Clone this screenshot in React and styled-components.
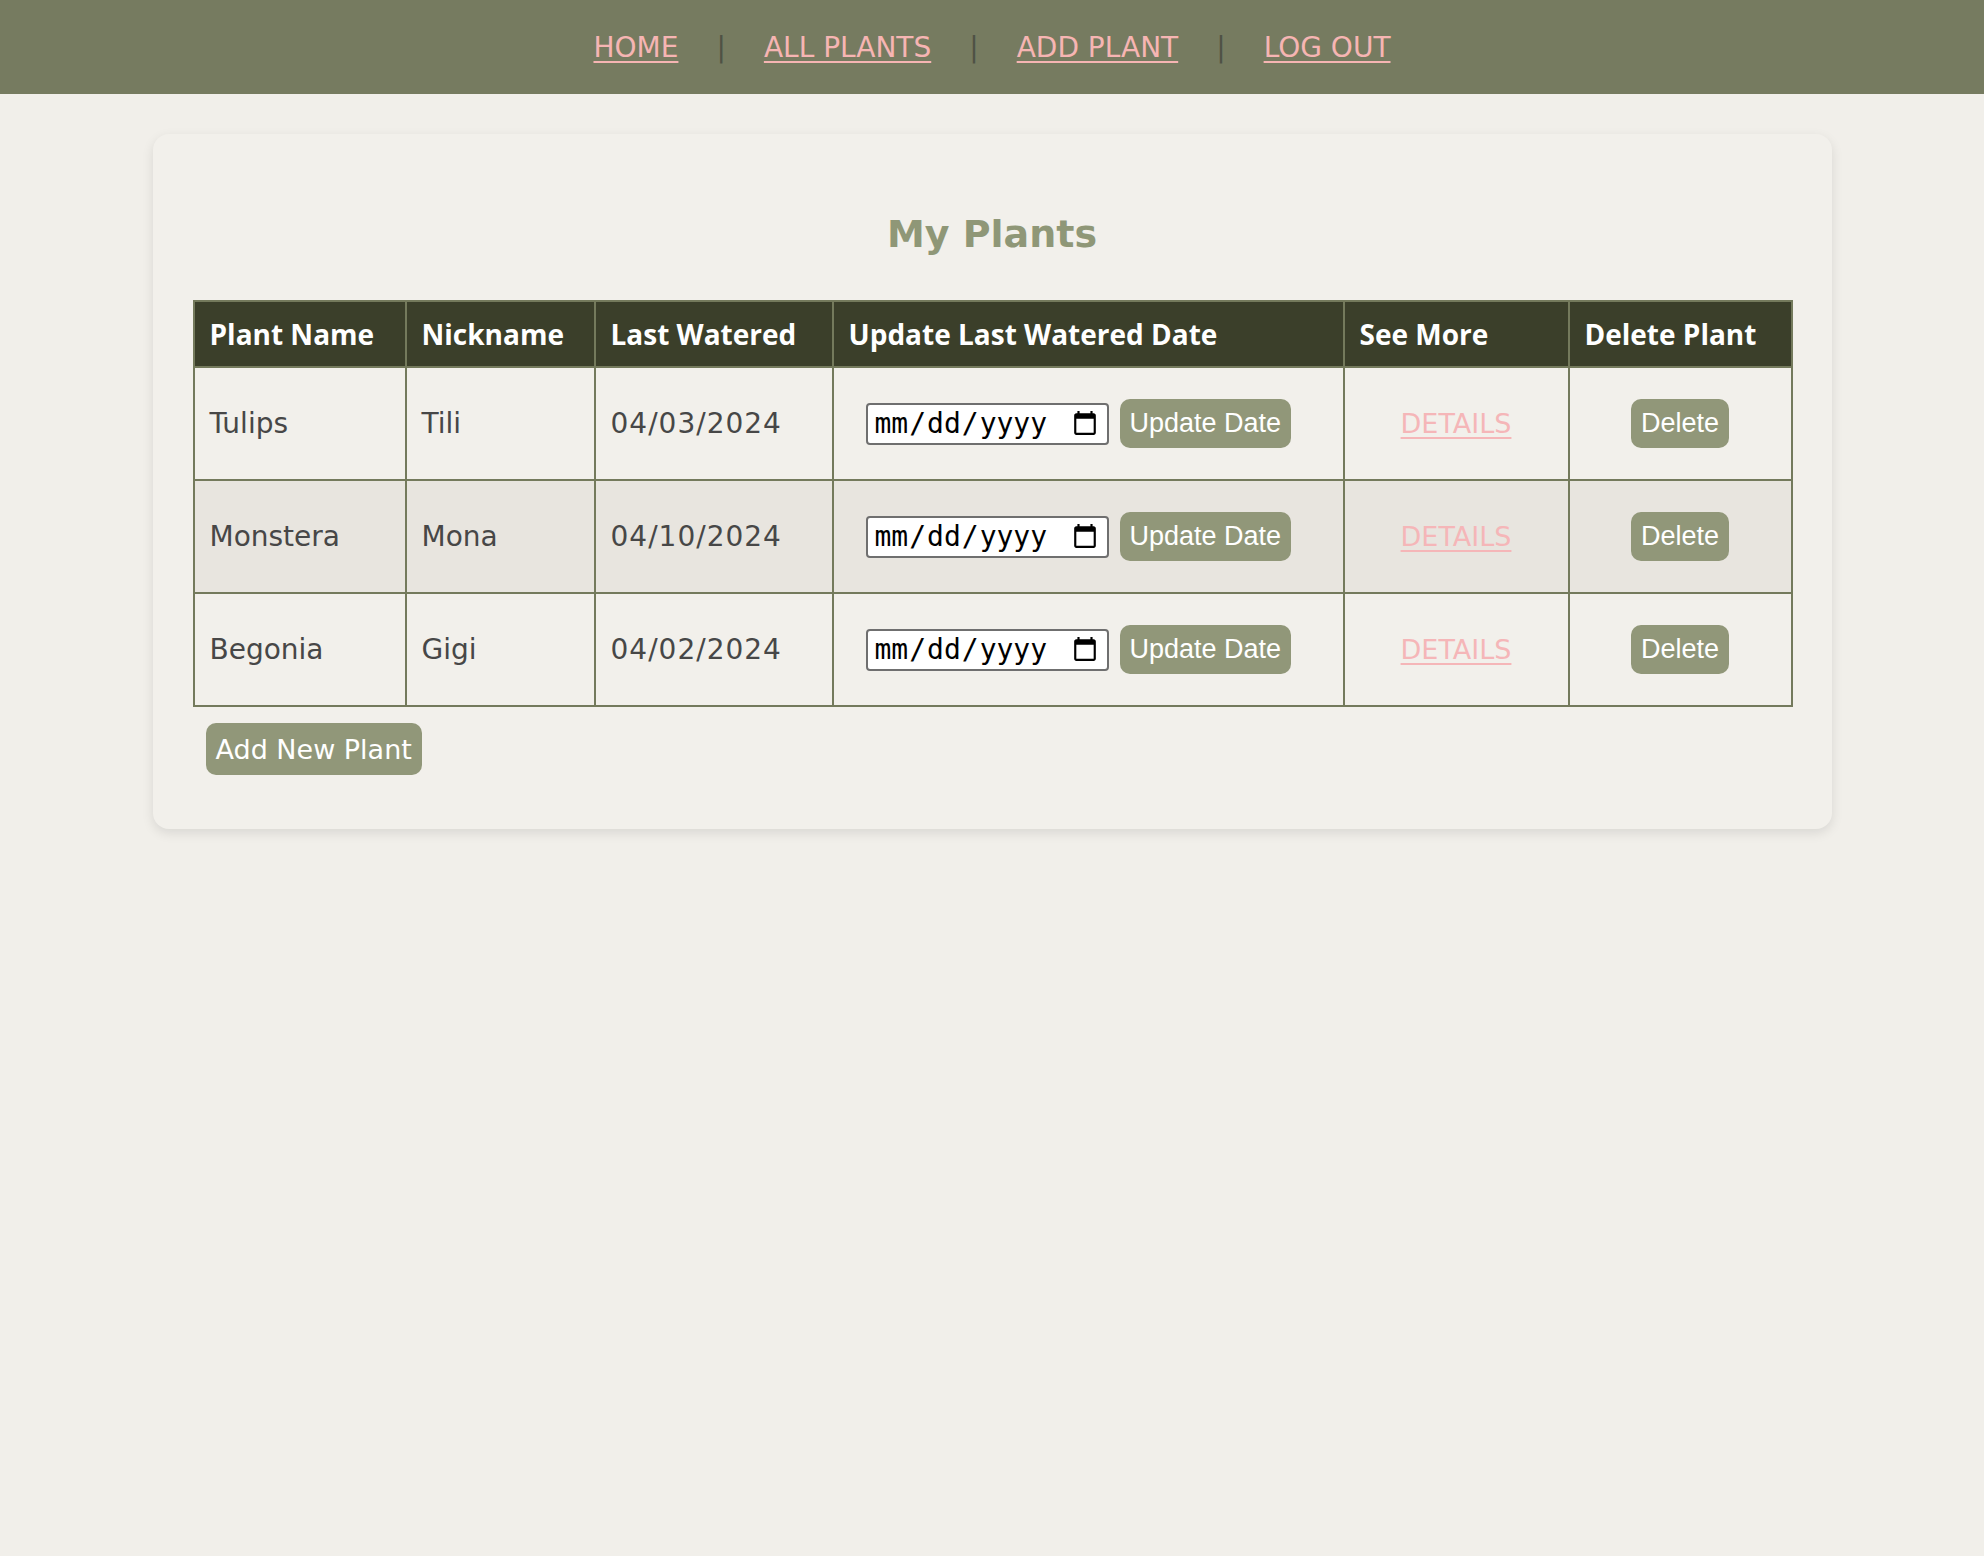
import React from 'react';
import styled, { createGlobalStyle } from 'styled-components';

const GlobalStyle = createGlobalStyle`
  html, body {
    margin: 0;
    padding: 0;
    background-color: #f1efea;
    font-family: "DejaVu Sans", "Noto Sans", sans-serif;
  }
`;

const NavBar = styled.nav`
  display: flex;
  justify-content: center;
  align-items: center;
  height: 94px;
  background-color: #767b60;
`;

const NavLink = styled.a`
  font-size: 28px;
  color: #f6b5b3;
  text-decoration: underline;
  text-underline-offset: 4px;
  text-decoration-thickness: 2px;
  cursor: pointer;
`;

const NavSep = styled.span`
  font-size: 28px;
  color: #4f5245;
  margin: 0 38px;
`;

const Card = styled.main`
  width: 1599px;
  margin: 40px auto;
  padding: 78px 40px 54px;
  background-color: #f2f0eb;
  border-radius: 16px;
  box-shadow: 0 4px 12px rgba(0, 0, 0, 0.1);
`;

const Title = styled.h2`
  margin: 0 0 44px;
  text-align: center;
  font-size: 38px;
  line-height: 44px;
  color: #8f9777;
`;

const Table = styled.table`
  width: 100%;
  border-collapse: collapse;
  table-layout: fixed;
  border: 2px solid #747a5c;
`;

const Th = styled.th`
  box-sizing: border-box;
  width: ${({ w }) => w}px;
  padding: 15px 15px;
  text-align: left;
  font-family: "Open Sans", "DejaVu Sans", sans-serif;
  font-weight: 700;
  font-size: 28px;
  line-height: 34px;
  color: #ffffff;
  background-color: #3b3f2a;
  border: 2px solid #747a5c;
  border-radius: 4px;
`;

const Row = styled.tr`
  background-color: ${({ alt }) => (alt ? '#e8e5df' : '#f2f0eb')};
`;

const Td = styled.td`
  height: 79px;
  padding: 16px 15px;
  font-size: 28px;
  color: #474747;
  letter-spacing: ${({ spaced }) => (spaced ? '1px' : '0')};
  text-align: ${({ center }) => (center ? 'center' : 'left')};
  border: 2px solid #747a5c;
`;

const DateForm = styled.div`
  display: flex;
  align-items: center;
  gap: 11px;
  padding-left: 17px;
`;

const DateInput = styled.input`
  width: 243px;
  height: 42px;
  box-sizing: border-box;
  padding: 0 6px;
  font-family: "DejaVu Sans Mono", monospace;
  font-size: 28px;
  color: #000;
  background: #fff;
  border: 2px solid #6f6f6f;
  border-radius: 4px;
`;

const SmallButton = styled.button`
  height: 49px;
  padding: 0 10px;
  font-family: "Liberation Sans", Arial, sans-serif;
  font-size: 27px;
  color: #ffffff;
  background-color: #919779;
  border: none;
  border-radius: 10px;
  cursor: pointer;
`;

const DetailsLink = styled.a`
  font-size: 27px;
  color: #f5b6b8;
  text-decoration: underline;
  text-underline-offset: 4px;
  text-decoration-thickness: 2px;
  cursor: pointer;
`;

const AddButton = styled.button`
  margin: 16px 0 0 13px;
  height: 52px;
  padding: 0 10px;
  font-family: "DejaVu Sans", sans-serif;
  font-size: 27px;
  color: #ffffff;
  background-color: #919779;
  border: none;
  border-radius: 10px;
  cursor: pointer;
`;

const plants = [
  { name: 'Tulips', nickname: 'Tili', watered: '04/03/2024' },
  { name: 'Monstera', nickname: 'Mona', watered: '04/10/2024' },
  { name: 'Begonia', nickname: 'Gigi', watered: '04/02/2024' },
];

const columns = [
  ['Plant Name', 212],
  ['Nickname', 189],
  ['Last Watered', 238],
  ['Update Last Watered Date', 511],
  ['See More', 225],
  ['Delete Plant', 223],
];

const links = ['HOME', 'ALL PLANTS', 'ADD PLANT', 'LOG OUT'];

export default function App() {
  return (
    <>
      <GlobalStyle />
      <NavBar>
        {links.map((l, i) => (
          <React.Fragment key={l}>
            {i > 0 && <NavSep>|</NavSep>}
            <NavLink>{l}</NavLink>
          </React.Fragment>
        ))}
      </NavBar>

      <Card>
        <Title>My Plants</Title>
        <Table>
          <thead>
            <tr>
              {columns.map(([label, w]) => (
                <Th key={label} w={w}>{label}</Th>
              ))}
            </tr>
          </thead>
          <tbody>
            {plants.map((p, i) => (
              <Row key={p.name} alt={i % 2 === 1}>
                <Td>{p.name}</Td>
                <Td>{p.nickname}</Td>
                <Td spaced>{p.watered}</Td>
                <Td>
                  <DateForm>
                    <DateInput type="date" />
                    <SmallButton>Update Date</SmallButton>
                  </DateForm>
                </Td>
                <Td center>
                  <DetailsLink>DETAILS</DetailsLink>
                </Td>
                <Td center>
                  <SmallButton>Delete</SmallButton>
                </Td>
              </Row>
            ))}
          </tbody>
        </Table>
        <AddButton>Add New Plant</AddButton>
      </Card>
    </>
  );
}
